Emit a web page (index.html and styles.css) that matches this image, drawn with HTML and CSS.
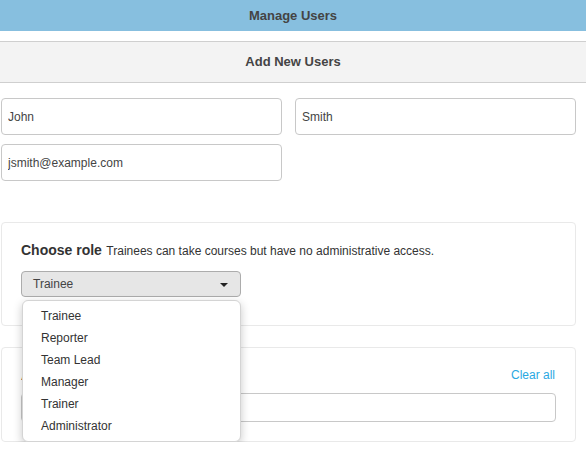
FILE: index.html
```html
<!DOCTYPE html>
<html>
<head>
<meta charset="utf-8">
<link rel="stylesheet" href="styles.css">
</head>
<body>
<div class="topbar">Manage Users</div>
<div class="section-bar">Add New Users</div>
<div class="content">
  <div class="fields">
    <input class="field" type="text" value="John">
    <input class="field" type="text" value="Smith">
    <input class="field" type="text" value="jsmith@example.com">
  </div>

  <div class="card role-card">
    <div class="role-title"><span class="role-label">Choose role</span> <span class="role-desc">Trainees can take courses but have no administrative access.</span></div>
    <div class="select-wrap">
      <div class="select">
        <span>Trainee</span>
        <svg class="caret" width="8" height="4" viewBox="0 0 8 4"><path d="M0 0 H8 L4 4 Z" fill="#222"/></svg>
      </div>
      <ul class="menu">
        <li>Trainee</li>
        <li>Reporter</li>
        <li>Team Lead</li>
        <li>Manager</li>
        <li>Trainer</li>
        <li>Administrator</li>
      </ul>
    </div>
  </div>

  <div class="card group-card">
    <div class="group-head">
      <span class="group-label">Add to groups</span>
      <a class="clear" href="#">Clear all</a>
    </div>
    <input class="group-input" type="text">
  </div>
</div>
</body>
</html>
```
FILE: styles.css
```css
html, body {
  margin: 0;
  padding: 0;
  background: #fff;
  font-family: "Liberation Sans", Arial, sans-serif;
  color: #333;
}

.topbar {
  height: 31px;
  line-height: 31px;
  background: #87bfdf;
  color: #444;
  font-weight: bold;
  font-size: 13px;
  text-align: center;
}

.section-bar {
  margin-top: 10px;
  height: 40px;
  line-height: 39px;
  border-top: 1px solid #cfcfcf;
  border-bottom: 1px solid #cfcfcf;
  background: #f3f3f3;
  color: #444;
  font-weight: bold;
  font-size: 13px;
  text-align: center;
}

.content {
  padding: 15px 10px 0 1px;
}

.fields {
  display: grid;
  grid-template-columns: 1fr 1fr;
  column-gap: 13px;
  row-gap: 9px;
}

.field {
  box-sizing: border-box;
  height: 37px;
  width: 100%;
  margin: 0;
  padding: 0 6px;
  border: 1px solid #c8c8c8;
  border-radius: 4px;
  font-family: inherit;
  font-size: 12px;
  color: #444;
  background: #fff;
  outline: none;
}

.card {
  border: 1px solid #e9e9e9;
  border-radius: 4px;
  background: #fff;
}

.role-card {
  margin-top: 41px;
  padding: 18px 19px 28px;
}

.role-title {
  line-height: 18px;
  height: 18px;
}

.role-label {
  font-weight: bold;
  font-size: 14px;
  color: #333;
}

.role-desc {
  font-size: 12px;
  color: #333;
}

.select-wrap {
  position: relative;
  width: 220px;
  margin-top: 12px;
}

.select {
  box-sizing: border-box;
  height: 26px;
  display: flex;
  align-items: center;
  justify-content: space-between;
  padding: 0 12px 0 11px;
  border: 1px solid #acacac;
  border-radius: 4px;
  background: #e6e6e6;
  font-size: 12px;
  color: #444;
}

.caret {
  display: block;
  margin-top: 1px;
}

.menu {
  position: absolute;
  top: 29px;
  left: 1px;
  width: 219px;
  box-sizing: border-box;
  margin: 0;
  padding: 4px 0 4px;
  list-style: none;
  background: #fff;
  border: 1px solid #d4d4d4;
  border-radius: 6px;
  box-shadow: 0 3px 10px rgba(0, 0, 0, 0.22);
  z-index: 5;
}

.menu li {
  height: 22px;
  line-height: 22px;
  padding-left: 18px;
  font-size: 12px;
  color: #333;
}

.group-card {
  margin-top: 21px;
  padding: 18px 19px 19px;
}

.group-head {
  display: flex;
  justify-content: space-between;
  align-items: center;
  height: 18px;
  padding-right: 1px;
}

.group-label {
  font-size: 14px;
  font-weight: bold;
  color: #333;
}

.clear {
  font-size: 12px;
  color: #2aa8e2;
  text-decoration: none;
}

.group-input {
  display: block;
  box-sizing: border-box;
  width: 100%;
  height: 29px;
  margin: 9px 0 0;
  border: 1px solid #c8c8c8;
  border-radius: 4px;
  background: #fff;
  outline: none;
}
```
